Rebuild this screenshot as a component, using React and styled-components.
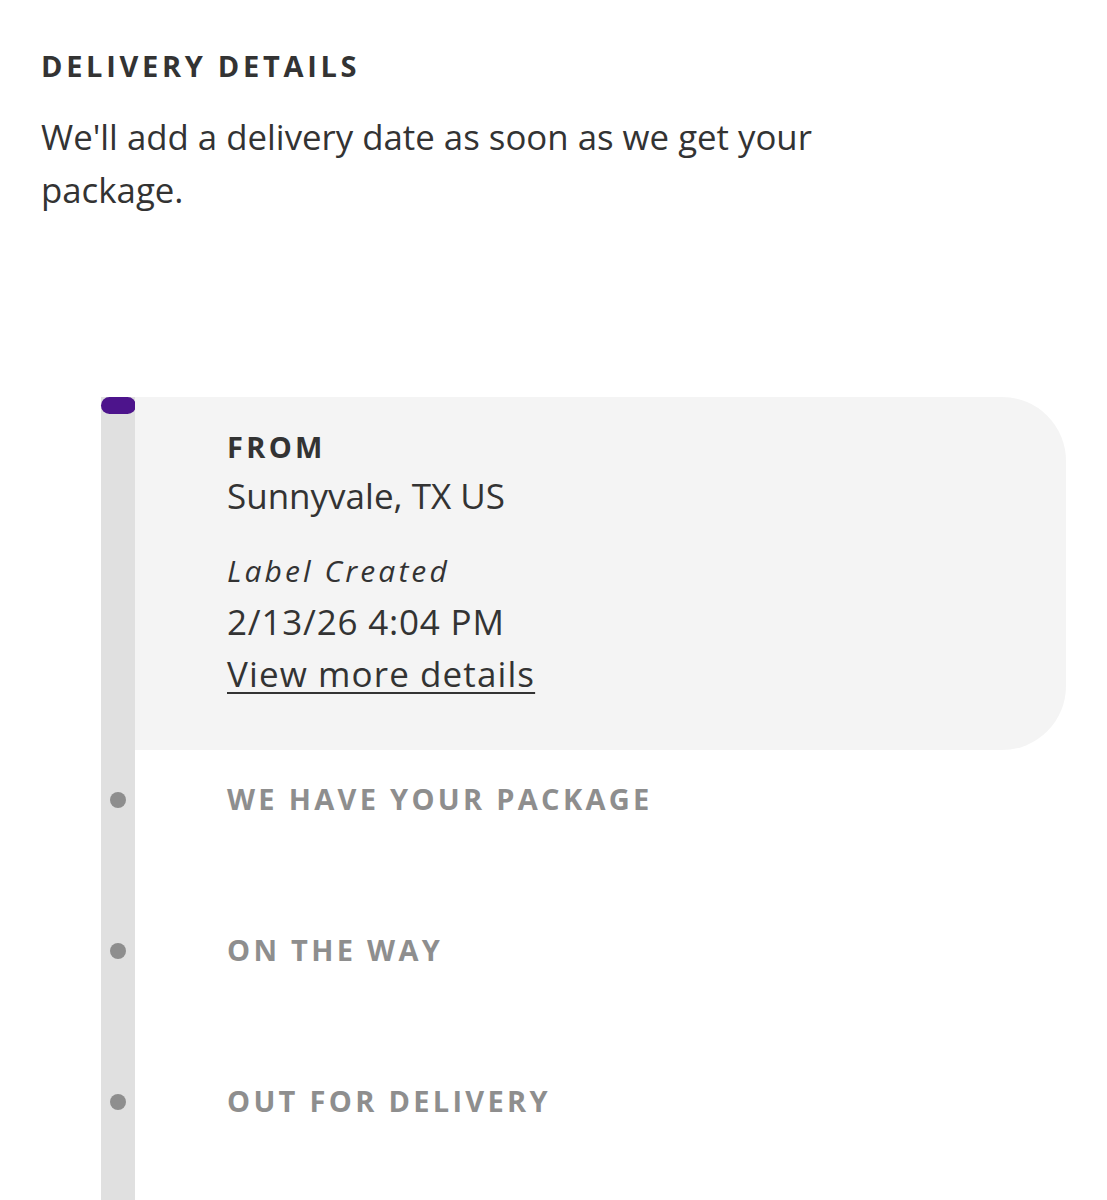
import React from 'react';
import styled, { createGlobalStyle } from 'styled-components';

const Global = createGlobalStyle`
  html, body {
    margin: 0;
    background: #ffffff;
  }
  body {
    font-family: "Open Sans", "Noto Sans", sans-serif;
    color: #333333;
  }
`;

const Page = styled.main`
  padding: 47px 41px 0 41px;
  height: 1200px;
  box-sizing: border-box;
  overflow: hidden;
`;

const Heading = styled.h2`
  margin: 0;
  font-size: 29px;
  font-weight: 700;
  letter-spacing: 3.7px;
  line-height: 38px;
  color: #333333;
`;

const Intro = styled.p`
  margin: 25px 0 0;
  font-size: 34.8px;
  line-height: 53px;
  max-width: 830px;
  color: #333333;
`;

const Timeline = styled.ol`
  list-style: none;
  margin: 181px 0 0 60px;
  padding: 0;
  display: flex;
  flex-direction: column;
`;

const Step = styled.li`
  display: grid;
  grid-template-columns: 34px 1fr;
  min-height: ${p => (p.$current ? 353 : 151)}px;
`;

const Rail = styled.div`
  background: #e0e0e0;
  display: flex;
  flex-direction: column;
  align-items: center;
  padding-top: ${p => (p.$current ? 0 : 42)}px;
`;

const Cap = styled.span`
  width: 35px;
  height: 17px;
  border-radius: 9px;
  background: #4d148c;
`;

const Dot = styled.span`
  width: 16px;
  height: 16px;
  border-radius: 50%;
  background: #8e8e8e;
`;

const Card = styled.div`
  background: #f4f4f4;
  border-radius: 0 64px 64px 0;
  padding: 30px 0 0 92px;
`;

const StepTitle = styled.h3`
  margin: 0;
  font-size: 29px;
  font-weight: 700;
  letter-spacing: 3.3px;
  line-height: 40px;
  color: ${p => (p.$muted ? '#8e8e8e' : '#333333')};
`;

const Place = styled.div`
  margin-top: 3px;
  font-size: 35px;
  line-height: 52px;
`;

const Status = styled.div`
  margin-top: 29px;
  font-size: 30px;
  font-style: italic;
  letter-spacing: 3.1px;
  line-height: 40px;
`;

const Stamp = styled.div`
  margin-top: 5px;
  font-size: 35px;
  letter-spacing: 0.8px;
  line-height: 52px;
`;

const MoreLink = styled.a`
  display: inline-block;
  font-size: 35px;
  letter-spacing: 1.1px;
  line-height: 52px;
  color: #333333;
  text-decoration: underline;
  text-decoration-thickness: 2px;
  text-underline-offset: 5px;
`;

const Pending = styled.div`
  padding: 29px 0 0 92px;
`;

const upcoming = ['WE HAVE YOUR PACKAGE', 'ON THE WAY', 'OUT FOR DELIVERY'];

export default function App() {
  return (
    <>
      <Global />
      <Page>
        <Heading>DELIVERY DETAILS</Heading>
        <Intro>We'll add a delivery date as soon as we get your package.</Intro>
        <Timeline>
          <Step $current>
            <Rail $current>
              <Cap />
            </Rail>
            <Card>
              <StepTitle>FROM</StepTitle>
              <Place>Sunnyvale, TX US</Place>
              <Status>Label Created</Status>
              <Stamp>2/13/26 4:04 PM</Stamp>
              <MoreLink href="#">View more details</MoreLink>
            </Card>
          </Step>
          {upcoming.map(label => (
            <Step key={label}>
              <Rail>
                <Dot />
              </Rail>
              <Pending>
                <StepTitle $muted>{label}</StepTitle>
              </Pending>
            </Step>
          ))}
        </Timeline>
      </Page>
    </>
  );
}
